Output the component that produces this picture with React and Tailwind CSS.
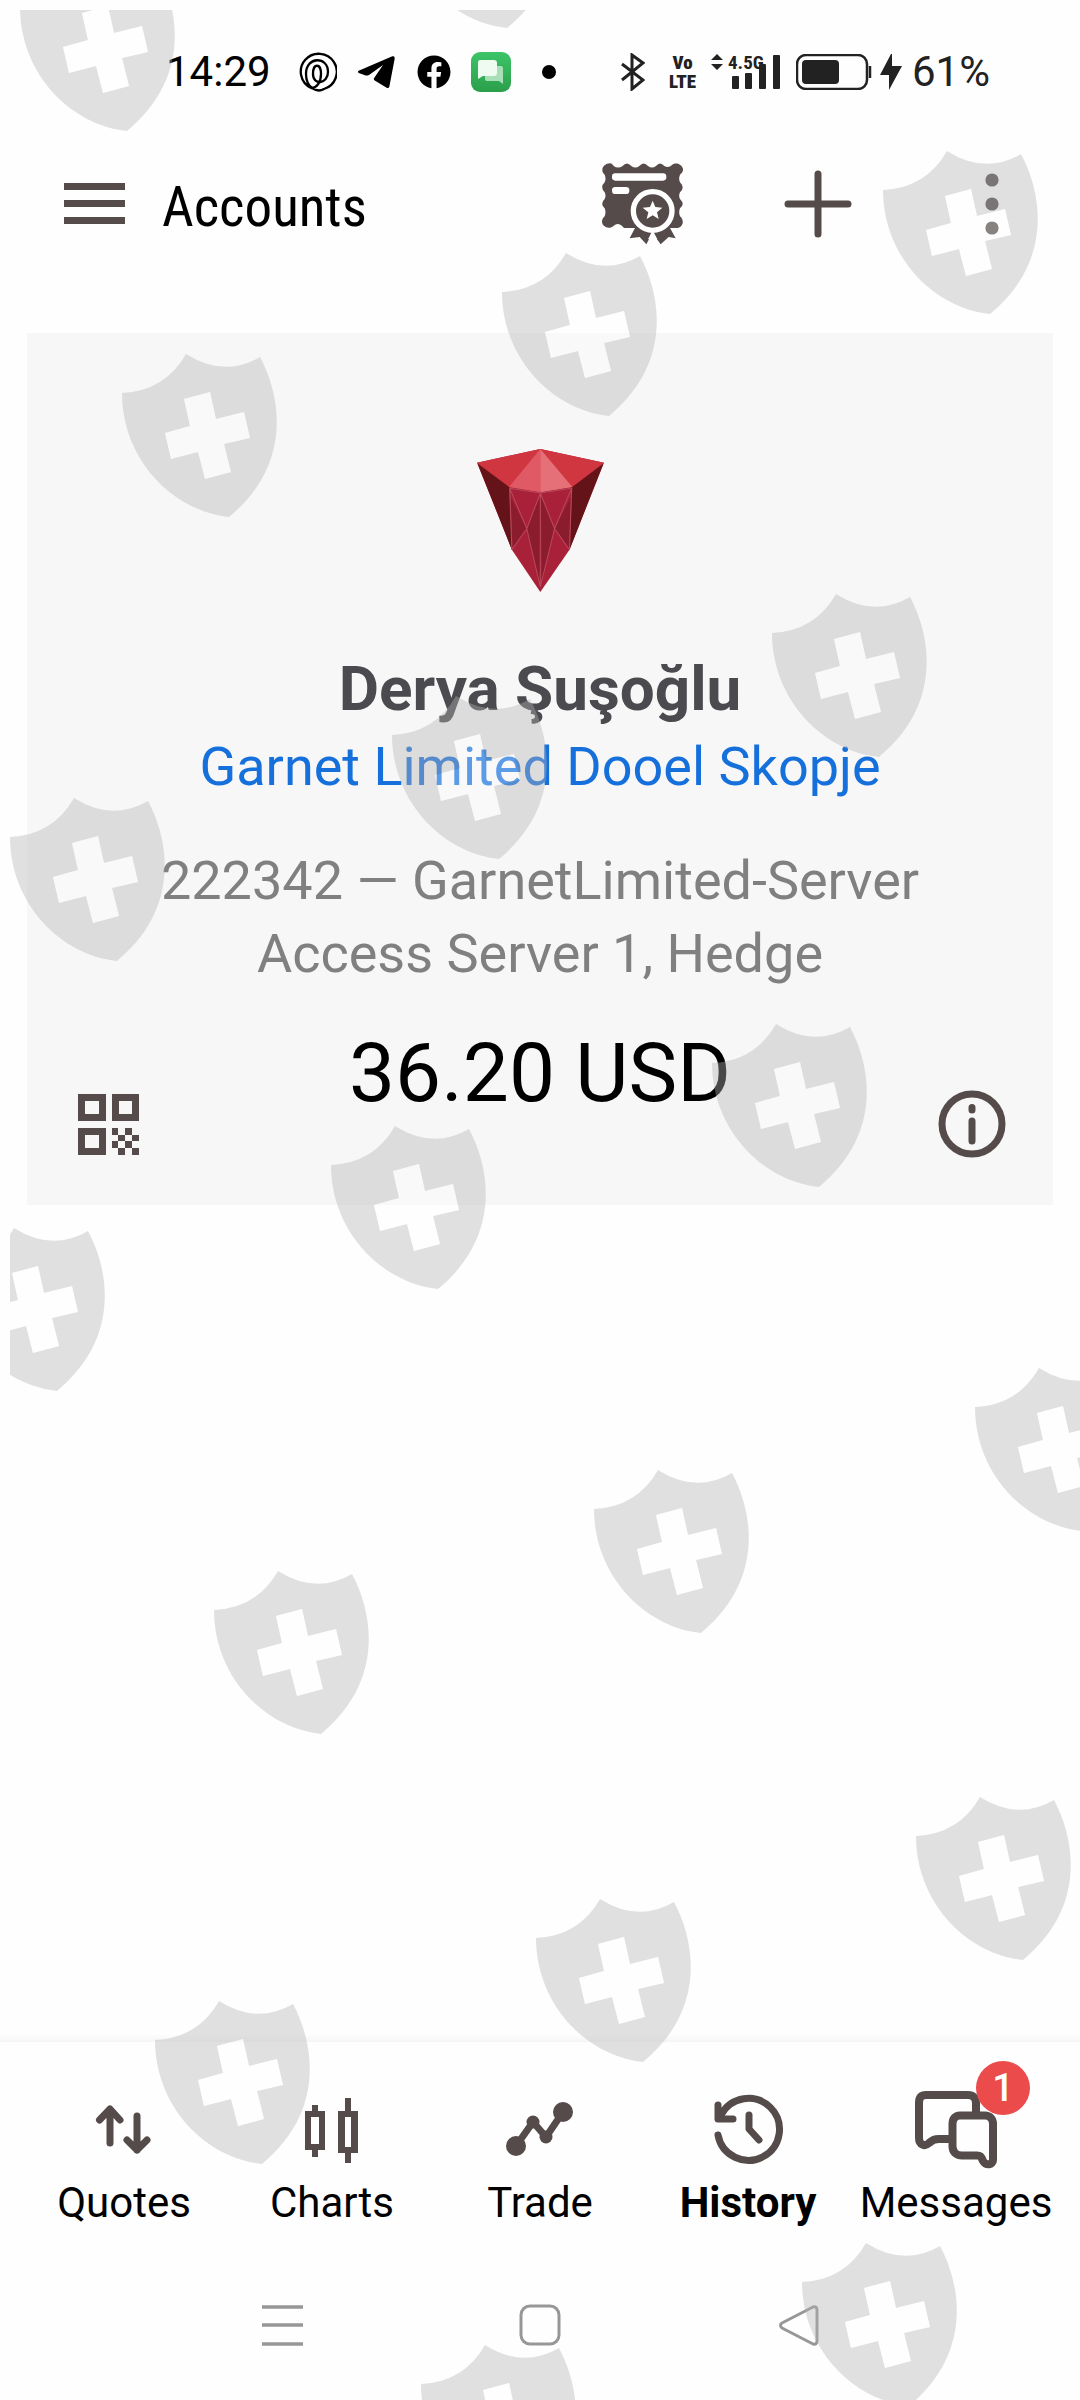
import React from 'react';
import { FaFacebook } from 'react-icons/fa';

// Top-left corner of every watermark shield
const SHIELDS = [
  [10, -42], [390, -145], [873, 141], [492, 243], [112, 344], [762, 584],
  [382, 686], [0, 788], [702, 1014], [321, 1116], [-60, 1218], [965, 1358],
  [584, 1460], [204, 1561], [906, 1787], [526, 1889], [145, 1991], [792, 2233],
  [411, 2335],
];

function Watermark() {
  return (
    <div className="pointer-events-none absolute top-[10px] right-0 bottom-0 left-[10px] z-20 overflow-hidden">
      <svg className="h-full w-full" aria-hidden="true">
        {SHIELDS.map(([x, y]) => (
          <g key={`${x}:${y}`} transform={`translate(${x} ${y})`}>
            <path
              fill="#b4b4b4"
              fillOpacity="0.4"
              fillRule="evenodd"
              d="M64 0Q102 24 138 3C162 48 167 114 107 163C50 157 0 105 0 39Q43 37 64 0ZM62 45L88 38L94 65L122 58L128 84L102 90L109 118L83 125L76 98L49 105L43 79L68 72Z"
            />
            <path
              fill="#fff"
              fillOpacity="0.3"
              d="M62 45L88 38L94 65L122 58L128 84L102 90L109 118L83 125L76 98L49 105L43 79L68 72Z"
            />
          </g>
        ))}
      </svg>
    </div>
  );
}

function StatusBar() {
  return (
    <div className="flex h-36 items-center justify-between pr-[90px] pl-[166px] text-black">
      <div className="flex items-center">
        <span className="text-[42px] leading-none">14:29</span>
        <div className="ml-[26px] flex items-center gap-5">
          <svg className="h-10 w-10" viewBox="0 0 40 40" fill="none" stroke="currentColor" strokeWidth="2.3">
            <path d="M14 36A18 18 0 1 1 27 37C20 41 9 36 9 22C9 4 31 4 31 20C31 32 16 34 16 22C16 11 24 11 24 22C24 30 20 36 14 36" />
          </svg>
          <svg className="h-10 w-10" viewBox="588 70 120 120" fill="currentColor">
            <path d="M593 126L694 83Q702 81 701 90L685 174Q683 180 677 177L640 155Q636 151 640 147L666 109L624 139Q618 142 612 140L593 133Q588 129 593 126Z" />
          </svg>
          <FaFacebook className="h-[34px] w-[34px]" />
          <svg className="h-10 w-10" viewBox="0 0 40 40">
            <defs>
              <linearGradient id="chat" x1="0" y1="0" x2="0" y2="1">
                <stop offset="0" stopColor="#3cc468" />
                <stop offset="1" stopColor="#2b9f4b" />
              </linearGradient>
            </defs>
            <rect width="40" height="40" rx="9" fill="url(#chat)" />
            <path d="M16 14H30Q32 14 32 16V32L28 29H16Q14 29 14 27V16Q14 14 16 14Z" fill="#a9dfb6" />
            <path d="M9 8H23Q26 8 26 11V21Q26 24 23 24H12L7 27V11Q7 8 9 8Z" fill="#effaf0" />
          </svg>
        </div>
        <span className="ml-[31px] h-3.5 w-3.5 rounded-full bg-black" />
      </div>

      <div className="flex items-center text-[#222]">
        <svg className="h-[38px] w-6" viewBox="0 0 24 38" fill="none" stroke="currentColor" strokeWidth="3">
          <path d="M1 11L22 27L11 36V2L22 10L1 27" />
        </svg>
        <div className="ml-6 flex flex-col items-center font-['Roboto_Condensed',Roboto,sans-serif] text-[19px] leading-[19px] font-black">
          <span>Vo</span>
          <span>LTE</span>
        </div>
        <svg className="mb-5 ml-3.5 h-4 w-3.5" viewBox="0 0 14 16" fill="currentColor">
          <path d="M7 0L13 6H1ZM7 16L13 10H1Z" />
        </svg>
        <div className="relative ml-1.5 h-9">
          <svg className="h-9 w-[50px]" viewBox="0 0 50 36" fill="currentColor">
            <rect x="2" y="22" width="7" height="13" rx="1" />
            <rect x="15" y="19" width="7" height="16" rx="1" />
            <rect x="29" y="10" width="7" height="25" rx="1" />
            <rect x="43" y="1" width="7" height="34" rx="1" />
          </svg>
          <span className="absolute -top-px left-[-2px] font-['Roboto_Condensed',Roboto,sans-serif] text-[19px] leading-[19px] font-bold">
            4.5G
          </span>
        </div>
        <svg className="ml-4 h-9 w-[76px]" viewBox="0 0 76 36">
          <rect x="1" y="1" width="70" height="34" rx="9" fill="none" stroke="currentColor" strokeWidth="2.5" />
          <rect x="6" y="6" width="37" height="24" rx="4" fill="currentColor" />
          <path d="M74 12V24" stroke="currentColor" strokeWidth="2.5" />
        </svg>
        <svg className="ml-2 h-9 w-[22px]" viewBox="0 0 22 36" fill="currentColor">
          <path d="M11 0L0 21H9V36L22 12H12V0Z" />
        </svg>
        <span className="ml-2.5 text-[42px] leading-none">61%</span>
      </div>
    </div>
  );
}

function CertificateIcon() {
  return (
    <svg className="h-[82px] w-[81px]" viewBox="126 490 243 246">
      <path
        fill="#544b4a"
        d="M150 491C155 491 158 495 161 499Q174 508 188 499Q200 484 214 499Q226 508 238 499Q251 484 264 499Q276 508 288 499Q300 484 313 499Q326 506 336 496C350 484 371 497 369 512C368 518 365 521 360 525Q355 538 360 548Q376 564 360 578Q355 588 360 598Q376 614 360 626Q355 638 360 650C376 664 367 685 350 685H330L347 716L326 712L302 734L277 700L259 734L239 712L209 716L225 685H192Q176 666 161 678C147 692 124 680 126 664C127 658 130 654 134 650Q139 638 134 626Q119 612 134 598Q139 588 134 578Q119 562 134 548Q139 538 134 525C118 510 132 491 150 491Z"
      />
      <rect x="156" y="521" width="163" height="22" rx="10" fill="#fff" />
      <rect x="156" y="562" width="52" height="21" rx="10" fill="#fff" />
      <circle cx="278" cy="634" r="58" fill="#544b4a" stroke="#fff" strokeWidth="16" />
      <path d="M278 603L286 622L307 624L291 638L296 658L278 647L260 658L265 638L248 624L270 622Z" fill="#fff" />
      <path d="M278 700L268 720M278 700L288 720" stroke="#fff" strokeWidth="8" />
    </svg>
  );
}

function Header() {
  return (
    <header className="flex h-[120px] items-center pr-[81px] pl-16 text-[#544b4a]">
      <button type="button" aria-label="Menu">
        <svg className="h-[42px] w-[61px]" viewBox="0 0 61 42" fill="currentColor">
          <path d="M0 0H61V7H0ZM0 17H61V24H0ZM0 34H61V41H0Z" />
        </svg>
      </button>
      <h1 className="ml-[37px] flex-1 pt-1.5 font-['Roboto_Condensed',Roboto,sans-serif] text-[55px] leading-none text-black">
        Accounts
      </h1>
      <button type="button" aria-label="Certificate">
        <CertificateIcon />
      </button>
      <button type="button" aria-label="Add account" className="ml-[101px]">
        <svg className="h-[68px] w-[68px]" viewBox="0 0 68 68" stroke="currentColor" strokeWidth="7" strokeLinecap="round">
          <path d="M34 4V64M4 34H64" />
        </svg>
      </button>
      <button type="button" aria-label="More" className="ml-[133px]">
        <svg className="h-[62px] w-3.5" viewBox="0 0 14 62" fill="currentColor">
          <circle cx="7" cy="7" r="6.6" />
          <circle cx="7" cy="31" r="6.6" />
          <circle cx="7" cy="55" r="6.6" />
        </svg>
      </button>
    </header>
  );
}

function GarnetLogo() {
  return (
    <svg className="h-[143px] w-[127px]" viewBox="1050 386 357 429" preserveAspectRatio="none" aria-label="Garnet">
      <path d="M1050 427L1228 386L1407 427L1310 688L1228 815L1148 688Z" fill="#a82138" />
      <path d="M1050 427L1228 386L1407 427L1318 500L1228 514L1140 500Z" fill="#d0363f" />
      <path d="M1228 386L1140 500L1228 516Z" fill="#e05a65" />
      <path d="M1228 386L1318 500L1228 516Z" fill="#e57078" />
      <path d="M1052 430L1140 500L1148 688ZM1405 430L1318 500L1310 688Z" fill="#641419" />
      <path d="M1144 530L1190 625L1150 684ZM1314 530L1268 625L1308 684Z" fill="#8b1c2e" />
      <path d="M1228 524L1190 625L1226 790ZM1230 524L1268 625L1232 790Z" fill="#8b1c2e" />
      <path
        d="M1142 504L1228 518L1316 504M1142 504L1190 625L1228 518L1268 625L1316 504M1148 688L1190 625L1228 800L1268 625L1310 688M1228 518V800M1142 504L1148 688M1316 504L1310 688"
        fill="none"
        stroke="#b9485a"
        strokeWidth="3"
      />
    </svg>
  );
}

function AccountCard() {
  return (
    <section className="mx-[27px] mt-[69px] flex flex-col items-center bg-[#f7f7f7] pt-[116px] pb-[47px] text-center">
      <GarnetLogo />
      <h2 className="mt-[61px] text-[62px] leading-[72px] font-bold text-[#4a4a4f]">Derya Şuşoğlu</h2>
      <a href="#company" className="mt-1.5 text-[54px] leading-[72px] text-[#1670dc]">
        Garnet Limited Dooel Skopje
      </a>
      <p className="mt-[41px] text-[54px] leading-[73px] text-[#808080]">
        222342 — GarnetLimited-Server
        <br />
        Access Server 1, Hedge
      </p>
      <div className="mt-[35px] flex h-[133px] w-full items-end justify-between px-[47px] text-[#544b4a]">
        <button type="button" aria-label="QR code" className="flex h-[68px] w-[68px] items-center justify-center">
          <svg className="h-[61px] w-[61px]" viewBox="0 0 61 61" fill="currentColor" fillRule="evenodd">
            <path d="M0 0H28V27H0ZM7 7V20H21V7ZM34 0H61V27H34ZM41 7V20H54V7ZM0 34H28V61H0ZM7 41V54H21V41Z" />
            <path d="M34 34h6v7h-6zM47 34h7v7h-7zM40 41h7v6h-7zM54 41h7v6h-7zM34 47h6v7h-6zM47 47h7v7h-7zM40 54h7v7h-7zM54 54h7v7h-7z" />
          </svg>
        </button>
        <p className="self-start text-[82px] leading-[96px] text-black">36.20 USD</p>
        <button type="button" aria-label="Account info">
          <svg className="h-[68px] w-[68px]" viewBox="0 0 68 68" fill="none" stroke="currentColor" strokeWidth="7" strokeLinecap="round">
            <circle cx="34" cy="34" r="30" />
            <path d="M34 17.5V20M34 31V51" />
          </svg>
        </button>
      </div>
    </section>
  );
}

const TABS = [
  {
    label: 'Quotes',
    icon: <path d="M22 17V50M11.5 27L22 16L32 27M49 23V57M39 47L49 57L59 47" />,
  },
  {
    label: 'Charts',
    icon: (
      <g fill="currentColor" stroke="none" fillRule="evenodd">
        <path d="M16 12H22V18H29V57H22V64H16V57H9V18H16ZM15 24V51H23V24Z" />
        <path d="M49 5H55V18H62V60H55V70H49V60H42V18H49ZM49 24V54H55V24Z" />
      </g>
    ),
  },
  {
    label: 'Trade',
    icon: (
      <>
        <path d="M12 53L29 29L42 44L59 19" />
        <g fill="currentColor" stroke="none">
          <circle cx="12" cy="53" r="10" />
          <circle cx="29" cy="29" r="6.5" />
          <circle cx="42" cy="44" r="6.5" />
          <circle cx="59" cy="19" r="10" />
        </g>
      </>
    ),
  },
  {
    label: 'History',
    active: true,
    icon: <path d="M6 42A31 31 0 1 0 9 22M6 12V26H21M37 22V36L47 47" />,
  },
  {
    label: 'Messages',
    badge: 1,
    icon: (
      <g strokeWidth="8">
        <path d="M56 20V10C56 5 53 2 48 2H6C1 2 -1 5 -1 10V45C-1 52 5 54 9 50C13 47 14 46 19 46H31" />
        <path d="M40 22.5H65C70 22.5 73 26 73 31V67C73 72 66 73 63 68C61 63 60 62.5 57 62.5H42C36 62.5 32.5 59 32.5 53V31C32.5 26 35 22.5 40 22.5Z" />
      </g>
    ),
  },
];

function TabBar() {
  return (
    <nav className="grid grid-cols-5 px-5 pt-[51px]">
      {TABS.map((tab) => (
        <button key={tab.label} type="button" className="flex flex-col items-center gap-3.5">
          <span className="relative">
            <svg
              className="h-[72px] w-[72px] overflow-visible text-[#544b4a]"
              viewBox="0 0 72 72"
              fill="none"
              stroke="currentColor"
              strokeWidth="7"
              strokeLinecap="round"
              strokeLinejoin="round"
            >
              {tab.icon}
            </svg>
            {tab.badge && (
              <span className="absolute -top-8 left-14 flex h-[54px] w-[54px] items-center justify-center rounded-full bg-[#eb4b4b] text-[38px] leading-none font-medium text-white">
                {tab.badge}
              </span>
            )}
          </span>
          <span className={tab.active ? 'text-[42px] leading-[48px] font-bold' : 'text-[42px] leading-[48px]'}>
            {tab.label}
          </span>
        </button>
      ))}
    </nav>
  );
}

function SystemNav() {
  return (
    <div className="flex justify-center gap-[216px] pt-[77px] pb-[54px] text-[#979797]">
      <button type="button" aria-label="Recent apps">
        <svg className="h-[42px] w-[42px]" viewBox="0 0 42 42" stroke="currentColor" strokeWidth="3.5">
          <path d="M1 3H42M1 21H42M1 40H42" />
        </svg>
      </button>
      <button type="button" aria-label="Home">
        <svg className="h-[42px] w-[42px]" viewBox="0 0 42 42" fill="none" stroke="currentColor" strokeWidth="3">
          <rect x="2" y="2" width="38" height="38" rx="9" />
        </svg>
      </button>
      <button type="button" aria-label="Back">
        <svg className="h-[42px] w-[42px]" viewBox="0 0 42 42" fill="none" stroke="currentColor" strokeWidth="3" strokeLinejoin="round">
          <path d="M5 19L36 3Q40 2 40 6V37Q40 41 36 40L5 24Q2 21 5 19Z" />
        </svg>
      </button>
    </div>
  );
}

export default function App() {
  return (
    <div className="relative flex min-h-screen flex-col overflow-hidden bg-[#fefefe] font-[Roboto,sans-serif] text-black">
      <StatusBar />
      <Header />
      <main className="flex-1">
        <AccountCard />
      </main>
      <div className="h-2 bg-linear-to-b from-[#fefefe] to-[#f5f5f5]" />
      <TabBar />
      <SystemNav />
      <Watermark />
    </div>
  );
}
